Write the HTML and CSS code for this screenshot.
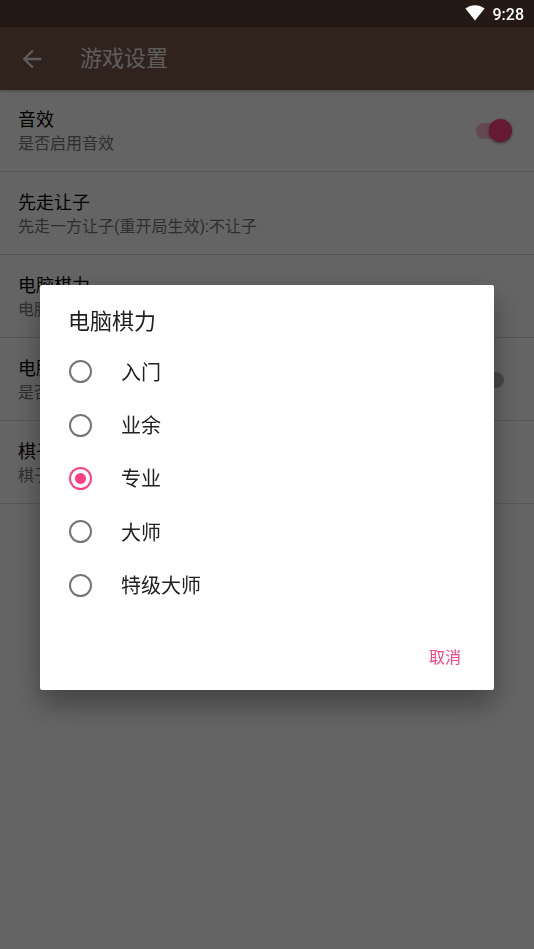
FILE: index.html
```html
<!DOCTYPE html>
<html lang="zh-CN">
<head>
<meta charset="utf-8">
<meta name="viewport" content="width=device-width, initial-scale=1">
<title>游戏设置</title>
<link rel="stylesheet" href="styles.css">
</head>
<body>
<div class="status">
  <svg class="wifi" viewBox="0 0 20 16" aria-hidden="true"><path d="M10 15.6 0.4 3.6C6-1 14-1 19.6 3.6Z"/></svg>
  <span>9:28</span>
</div>
<header class="toolbar">
  <button class="back" type="button" aria-label="返回">
    <svg viewBox="0 0 24 24" aria-hidden="true"><path d="M20 11H7.83l5.59-5.59L12 4l-8 8 8 8 1.41-1.41L7.83 13H20v-2z"/></svg>
  </button>
  <h1>游戏设置</h1>
</header>
<main class="settings">
  <div class="row">
    <label class="text" for="sound"><span class="name">音效</span><span class="summary">是否启用音效</span></label>
    <input class="switch" type="checkbox" id="sound" checked>
  </div>
  <div class="row">
    <div class="text"><span class="name">先走让子</span><span class="summary">先走一方让子(重开局生效):不让子</span></div>
  </div>
  <div class="row">
    <div class="text"><span class="name">电脑棋力</span><span class="summary">电脑</span></div>
  </div>
  <div class="row">
    <label class="text" for="computer"><span class="name">电脑</span><span class="summary">是否</span></label>
    <input class="switch" type="checkbox" id="computer">
  </div>
  <div class="row">
    <div class="text"><span class="name">棋子</span><span class="summary">棋子</span></div>
  </div>
</main>
<div class="scrim">
  <form class="dialog" role="dialog" aria-labelledby="dialog-title">
    <h2 id="dialog-title">电脑棋力</h2>
    <div class="options">
      <label class="option"><input type="radio" name="level"><span>入门</span></label>
      <label class="option"><input type="radio" name="level"><span>业余</span></label>
      <label class="option"><input type="radio" name="level" checked><span>专业</span></label>
      <label class="option"><input type="radio" name="level"><span>大师</span></label>
      <label class="option"><input type="radio" name="level"><span>特级大师</span></label>
    </div>
    <div class="actions"><button class="cancel" type="button">取消</button></div>
  </form>
</div>
</body>
</html>
```

FILE: styles.css
```css
* {
  box-sizing: border-box;
}

body {
  margin: 0;
  min-height: 100vh;
  background: #fafafa;
  color: #000;
  font-family: Roboto, "Noto Sans CJK SC", sans-serif;
}

h1,
h2 {
  margin: 0;
  font-size: 22px;
  font-weight: 400;
  line-height: 32px;
}

button {
  border: 0;
  padding: 0;
  background: none;
  font: inherit;
}

.status {
  display: flex;
  align-items: center;
  justify-content: flex-end;
  gap: 8px;
  height: 27px;
  padding: 2px 10px 0 0;
  background: #5d4037;
  color: #fff;
  font-size: 16px;
  font-weight: 500;
  line-height: 20px;
}

/* The system clock and signal stay bright above the scrim. */
.status > * {
  position: relative;
  z-index: 2;
}

.wifi {
  width: 20px;
  height: 16px;
  margin-bottom: 3px;
  fill: #fff;
}

.toolbar {
  position: relative;
  display: flex;
  align-items: center;
  gap: 34px;
  height: 63px;
  padding-left: 18px;
  background: #795548;
  color: #fff;
  box-shadow: 0 1px 3px rgba(0, 0, 0, 0.3);
}

.toolbar h1 {
  opacity: 0.87;
}

.back {
  width: 28px;
  height: 28px;
}

.back svg {
  display: block;
  fill: #fff;
  opacity: 0.87;
}

.row {
  display: flex;
  align-items: center;
  justify-content: space-between;
  padding: 19px 18px 16px;
  border-bottom: 1px solid #d6d6d6;
}

.row:first-child {
  padding-top: 18px;
}

.text {
  display: flex;
  flex-direction: column;
}

.name {
  font-size: 18px;
  line-height: 24px;
}

.summary {
  color: #757575;
  font-size: 16px;
  line-height: 23px;
}

.switch {
  appearance: none;
  display: flex;
  align-items: center;
  width: 32px;
  height: 16px;
  margin: 0 8px 2px 0;
  border-radius: 8px;
  background: #b4b4b4;
}

.switch::before {
  content: "";
  flex: none;
  width: 23px;
  height: 23px;
  margin-left: -4px;
  border-radius: 50%;
  background: #f1f1f1;
  box-shadow: 0 1px 3px rgba(0, 0, 0, 0.5);
}

.switch:not(:checked) {
  margin-right: 12px;
}

.switch:checked {
  background: #f9b4ca;
}

.switch:checked::before {
  margin-left: 13px;
  background: #ff4081;
}

.scrim {
  position: fixed;
  z-index: 1;
  inset: 0;
  display: flex;
  align-items: center;
  justify-content: center;
  padding-top: 26px;
  background: rgba(0, 0, 0, 0.6);
}

.dialog {
  width: 85%;
  border-radius: 2px;
  padding: 21px 0 8px;
  background: #fff;
  color: #212121;
  box-shadow: 0 14px 28px rgba(0, 0, 0, 0.35);
}

.dialog h2 {
  padding: 0 28px;
}

.options {
  display: grid;
  grid-auto-rows: 1fr;
  min-height: 267px;
  margin-top: 7px;
}

.option {
  display: flex;
  align-items: center;
  gap: 29px;
  padding-left: 29px;
  font-size: 20px;
  line-height: 30px;
}

.option span {
  padding-top: 2px;
}

.option input {
  appearance: none;
  display: grid;
  place-items: center;
  width: 23px;
  height: 23px;
  margin: 0;
  border: 2px solid #757575;
  border-radius: 50%;
}

.option input:checked {
  border-color: #ff4081;
}

.option input:checked::before {
  content: "";
  width: 11px;
  height: 11px;
  border-radius: 50%;
  background: #ff4081;
}

.actions {
  display: flex;
  justify-content: flex-end;
  padding: 17px 16px 0 0;
}

.cancel {
  height: 53px;
  padding: 0 17px;
  color: #ff4081;
  font-size: 16px;
}
```
